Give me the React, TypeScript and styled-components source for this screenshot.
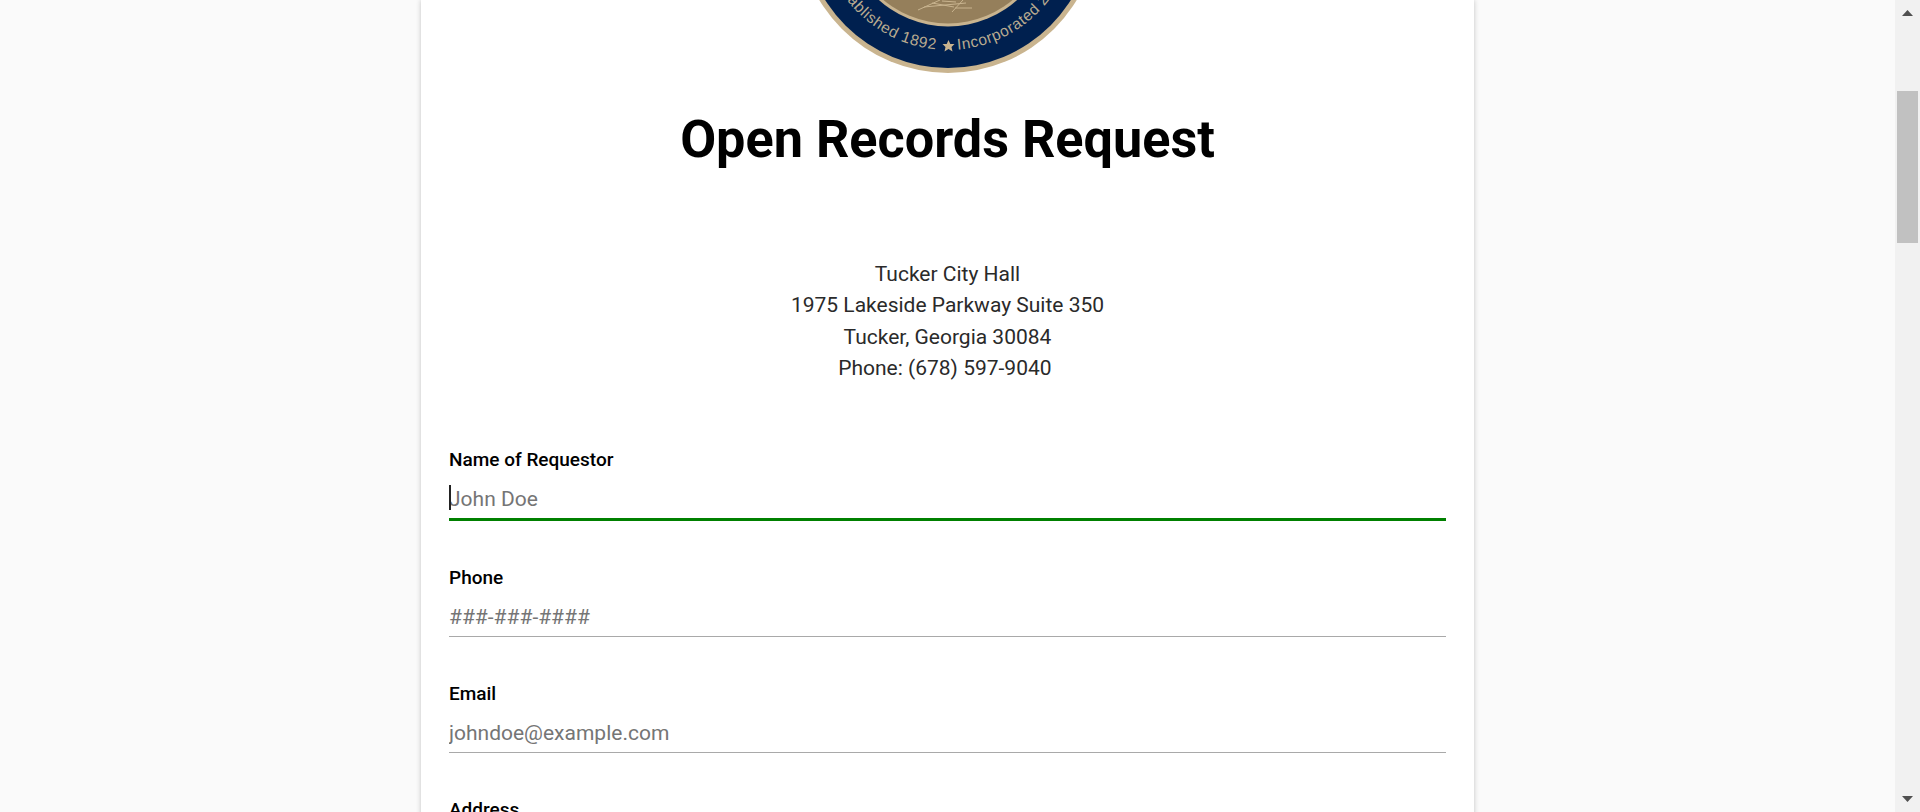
import React from "react";
import styled, { createGlobalStyle } from "styled-components";

const Global = createGlobalStyle`
  html, body { margin: 0; padding: 0; height: 100%; overflow: hidden; background: #fafafa; }
  #root { height: 100%; }
  * { box-sizing: border-box; }
`;
const Page = styled.div`
  display: flex; height: 812px; overflow: hidden; background: #fafafa;
  font-family: Roboto, "Liberation Sans", sans-serif; color: #000;
`;
const Viewport = styled.main`
  flex: 1; min-width: 0; display: flex; justify-content: center; overflow: hidden;
`;
const Card = styled.section`
  width: 1053px; height: 1400px; padding: 0 28px; background: #fff;
  box-shadow: 0 0 5px rgba(0, 0, 0, 0.22);
`;
const Seal = styled.svg`
  display: block; width: 300px; height: 74px; margin: 0 auto;
`;
const Title = styled.h1`
  margin: 35px 0 0; text-align: center; font-size: 52.2px; line-height: 61px; font-weight: 700;
`;
const Address = styled.address`
  margin: 89px 0 0; text-align: center; font-style: normal; font-size: 21px; font-weight: 400;
  line-height: 31.4px; color: #2a2a2a;
`;
const Form = styled.form`
  margin-top: 64px; display: flex; flex-direction: column;
`;
const Field = styled.div`
  display: flex; flex-direction: column; margin-bottom: 46px;
`;
const Label = styled.label`
  font-size: 19px; line-height: 22px; font-weight: 500; margin-bottom: 7px;
`;
const InputWrap = styled.div`
  position: relative;
`;
const Input = styled.input<{ $focused?: boolean }>`
  display: block; width: 100%; height: ${(p) => (p.$focused ? 43 : 41)}px; padding: 3px 0 0; border: 0; outline: 0;
  border-bottom: ${(p) => (p.$focused ? "3px solid #008000" : "1px solid #a9a9a9")};
  background: transparent; font: 400 21px Roboto, sans-serif; color: #000; caret-color: transparent;
  &::placeholder { color: #757575; opacity: 1; }
`;
const Caret = styled.span`
  position: absolute; left: 0; top: 7px; width: 2px; height: 25px; background: #222;
`;
const Scrollbar = styled.aside`
  flex: 0 0 25px; height: 100%; background: #f1f1f1; display: flex; flex-direction: column; align-items: center;
`;
const ArrowBox = styled.svg`
  display: block; flex: none; width: 11px; height: 6px;
`;
const UpArrow = styled(ArrowBox)`
  margin-top: 10px;
`;
const DownArrow = styled(ArrowBox)`
  margin-top: auto; margin-bottom: 10px;
`;
const Thumb = styled.div`
  width: 21px; height: 152px; margin-top: 75px; background: #c1c1c1;
`;

const fields = [
  { id: "name", label: "Name of Requestor", placeholder: "John Doe", focused: true },
  { id: "phone", label: "Phone", placeholder: "###-###-####" },
  { id: "email", label: "Email", placeholder: "johndoe@example.com" },
  { id: "address", label: "Address", placeholder: "" },
];

export default function App() {
  return (
    <Page>
      <Global />
      <Viewport>
        <Card>
          <Seal viewBox="-150 77 300 74" aria-label="City seal">
            <defs>
              <path id="sealArc" d="M -127 0 A 127 127 0 0 0 127 0" />
            </defs>
            <circle r="150" fill="#c9b48f" />
            <circle r="145" fill="#00204f" />
            <circle r="103.5" fill="#c9b48f" />
            <circle r="100.5" fill="#957f5b" />
            <g fill="none" stroke="#c9b48f" strokeWidth="1">
              <path d="M -30 87 L -8 77 M -24 84 L 18 80 M -16 80 L 6 84 M 4 89 L 15 77 M 7 85 L 24 85 M -6 78 L 8 79" />
            </g>
            <g fontFamily="'Liberation Sans', sans-serif" fontSize="15.5" letterSpacing="0.6" fill="#b9ab90">
              <text textAnchor="end">
                <textPath href="#sealArc" startOffset="47%">Established 1892</textPath>
              </text>
              <text textAnchor="start">
                <textPath href="#sealArc" startOffset="52.4%">Incorporated 2015</textPath>
              </text>
            </g>
            <polygon
              transform="translate(0.5 123)"
              fill="#c9b48f"
              points="0,-6 1.8,-2 6,-2 3,0.9 4,5.4 0,3 -4,5.4 -3,0.9 -6,-2 -1.8,-2"
            />
          </Seal>
          <Title>Open Records Request</Title>
          <Address>
            Tucker City Hall
            <br />
            1975 Lakeside Parkway Suite 350
            <br />
            Tucker, Georgia 30084
            <br />
            Phone: (678) 597-9040{"\u00a0"}
          </Address>
          <Form>
            {fields.map((f) => (
              <Field key={f.id}>
                <Label htmlFor={f.id}>{f.label}</Label>
                <InputWrap>
                  <Input id={f.id} placeholder={f.placeholder} $focused={f.focused} />
                  {f.focused && <Caret />}
                </InputWrap>
              </Field>
            ))}
          </Form>
        </Card>
      </Viewport>
      <Scrollbar>
        <UpArrow viewBox="0 0 11 6"><polygon points="5.5,0 11,6 0,6" fill="#505050" /></UpArrow>
        <Thumb />
        <DownArrow viewBox="0 0 11 6"><polygon points="0,0 11,0 5.5,6" fill="#505050" /></DownArrow>
      </Scrollbar>
    </Page>
  );
}
